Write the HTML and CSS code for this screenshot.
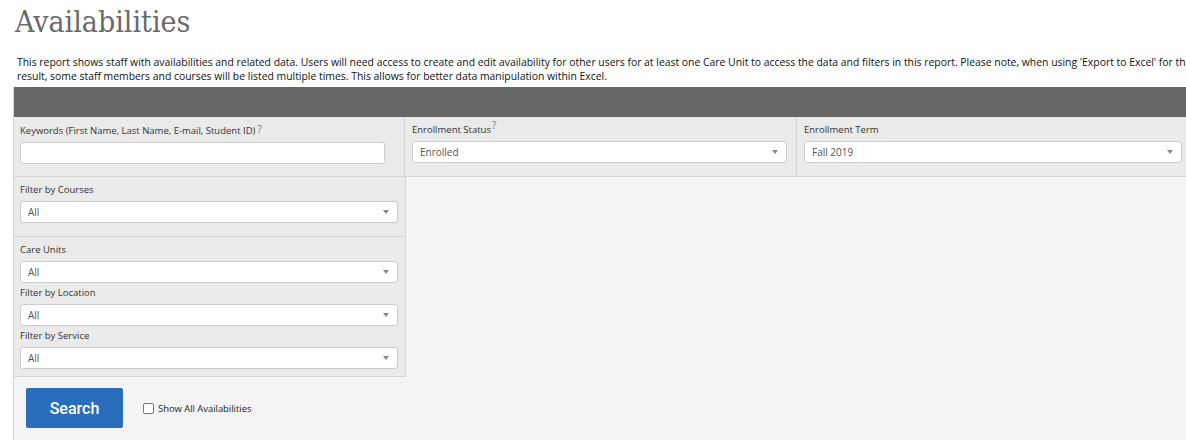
FILE: index.html
```html
<!DOCTYPE html>
<html>
<head>
<meta charset="utf-8">
<link rel="stylesheet" href="styles.css">
</head>
<body>
<div class="page">
  <h1 class="title">Availabilities</h1>
  <p class="desc">This report shows staff with availabilities and related data. Users will need access to create and edit availability for other users for at least one Care Unit to access the data and filters in this report. Please note, when using 'Export to Excel' for the result, some staff members and courses will be listed multiple times. This allows for better data manipulation within Excel.</p>
  <div class="panel">
    <div class="panel-head"></div>
    <div class="row-top">
      <div class="cell cell-kw">
        <label class="lbl">Keywords (First Name, Last Name, E-mail, Student ID)<span class="q">?</span></label>
        <input class="inp" type="text">
      </div>
      <div class="cell cell-status">
        <label class="lbl">Enrollment Status<sup class="qs">?</sup></label>
        <div class="sel"><span>Enrolled</span><i class="caret"></i></div>
      </div>
      <div class="cell cell-term">
        <label class="lbl">Enrollment Term</label>
        <div class="sel"><span>Fall 2019</span><i class="caret"></i></div>
      </div>
    </div>
    <div class="col-left">
      <div class="cell cell-courses">
        <label class="lbl">Filter by Courses</label>
        <div class="sel"><span>All</span><i class="caret"></i></div>
      </div>
      <div class="cell cell-units">
        <label class="lbl">Care Units</label>
        <div class="sel"><span>All</span><i class="caret"></i></div>
        <label class="lbl lbl-tight">Filter by Location</label>
        <div class="sel"><span>All</span><i class="caret"></i></div>
        <label class="lbl lbl-tight">Filter by Service</label>
        <div class="sel"><span>All</span><i class="caret"></i></div>
      </div>
    </div>
    <div class="actions">
      <button class="btn" type="button">Search</button>
      <label class="chk"><span class="box"></span>Show All Availabilities</label>
    </div>
  </div>
</div>
</body>
</html>
```
FILE: styles.css
```css
html, body {
  margin: 0;
  padding: 0;
  background: #ffffff;
  overflow: hidden;
}
body {
  font-family: "Open Sans", "Liberation Sans", sans-serif;
  color: #222;
}
.page {
  padding-left: 13px;
  width: 1173px;
}
.title {
  margin: 0 0 0 2px;
  padding-top: 2px;
  font-family: "DejaVu Serif Condensed", "DejaVu Serif", serif;
  font-stretch: condensed;
  font-weight: normal;
  font-size: 30px;
  line-height: 40px;
  color: #6a6a6a;
  letter-spacing: 0;
}
.desc {
  margin: 13px 0 0 4px;
  width: 1195px;
  font-size: 10.4px;
  line-height: 14px;
  color: #111;
}
.panel {
  margin-top: 4px;
  background: #f4f4f4;
  border-left: 1px solid #d6d6d6;
  height: 360px;
}
.panel-head {
  height: 30px;
  background: #666666;
}
.row-top {
  display: grid;
  grid-template-columns: 391px 392px 1fr;
  border-bottom: 1px solid #d6d6d6;
}
.cell {
  background: #eaeaea;
  box-sizing: border-box;
}
.row-top .cell {
  height: 59px;
  padding: 6px 9px 0 6px;
  border-right: 1px solid #d6d6d6;
}
.row-top .cell-term {
  border-right: none;
  padding-right: 4px;
}
.row-top .cell-status,
.row-top .cell-term {
  padding-left: 7px;
}
.lbl {
  display: block;
  font-size: 9.5px;
  line-height: 14px;
  color: #333;
  margin-bottom: 4px;
  white-space: nowrap;
}
.lbl-tight {
  margin-top: 3px;
  margin-bottom: 4px;
}
.q {
  color: #777;
  margin-left: 2px;
  font-size: 10px;
  position: relative;
  top: -1px;
}
.qs {
  color: #777;
  font-size: 10px;
  line-height: 0;
  margin-left: 1px;
}
.inp {
  display: block;
  box-sizing: border-box;
  width: 365px;
  height: 22px;
  margin: 0;
  border: 1px solid #cccccc;
  border-radius: 3px;
  background: #fff;
  padding: 0 6px;
}
.sel {
  box-sizing: border-box;
  height: 22px;
  border: 1px solid #cccccc;
  border-radius: 3px;
  background: #fff;
  display: flex;
  align-items: center;
  justify-content: space-between;
  padding: 0 8px 0 7px;
  font-size: 10px;
  color: #555;
}
.caret {
  width: 0;
  height: 0;
  border-left: 3.5px solid transparent;
  border-right: 3.5px solid transparent;
  border-top: 4px solid #888;
}
.col-left {
  width: 392px;
  box-sizing: border-box;
  border-right: 1px solid #d6d6d6;
  border-bottom: 1px solid #d6d6d6;
}
.col-left .cell {
  padding: 6px 7px 0 6px;
}
.cell-courses {
  height: 60px;
  border-bottom: 1px solid #d6d6d6;
}
.cell-units {
  height: 139px;
}
.actions {
  display: flex;
  align-items: center;
  padding: 11px 0 0 12px;
}
.btn {
  width: 97px;
  height: 40px;
  border: none;
  border-radius: 2px;
  background: #2a6ebb;
  color: #fff;
  font-family: Roboto, "Liberation Sans", sans-serif;
  font-weight: 500;
  font-size: 16px;
  padding: 0;
}
.chk {
  display: flex;
  align-items: center;
  margin-left: 20px;
  font-size: 9.4px;
  color: #222;
}
.box {
  width: 9px;
  height: 9px;
  border: 1px solid #777;
  border-radius: 2px;
  background: #fff;
  margin-right: 4px;
}
```
